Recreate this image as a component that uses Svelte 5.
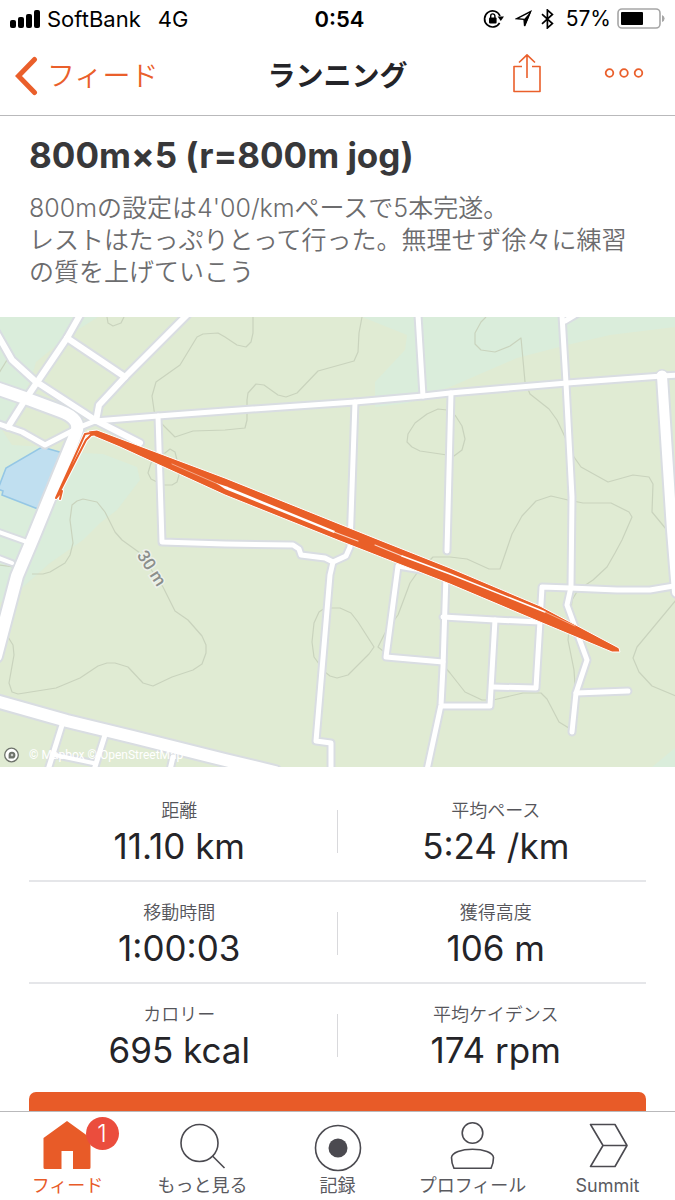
<script>
  const stats = [
    [{ label: '距離', value: '11.10 km' }, { label: '平均ペース', value: '5:24 /km' }],
    [{ label: '移動時間', value: '1:00:03' }, { label: '獲得高度', value: '106 m' }],
    [{ label: 'カロリー', value: '695 kcal' }, { label: '平均ケイデンス', value: '174 rpm' }]
  ];

  const tabs = [
    { id: 'feed', label: 'フィード', badge: 1 },
    { id: 'explore', label: 'もっと見る' },
    { id: 'record', label: '記録' },
    { id: 'profile', label: 'プロフィール' },
    { id: 'summit', label: 'Summit' }
  ];
  let active = $state('feed');

  // Streets: w is the width of the white surface
  const roads = [
    { w: 12, d: 'M-4 388L25 398L60 411Q82 419 76 433L33 538L17 576L-4 656' },
    { w: 12, d: 'M-4 701L67 721L133 737L225 760L275 772' },
    { w: 10, d: 'M662 376L672 530L677 592' },
    { w: 6, d: 'M-4 332L12 360L35 381L95 420L140 443' },
    { w: 6, d: 'M80 315L67 338L25 400L8 427' },
    { w: 6, d: 'M67 338L125 377' },
    { w: 6, d: 'M187 315L125 377L99 405L96 421' },
    { w: 5, d: 'M-4 423L22 432L45 445L80 427L95 421L158 416L225 411L355 402L423 396L450 393L567 383L662 376L680 375' },
    { w: 5, d: 'M158 416L162 542L225 544L293 545L299 549L301 555L325 558L333 562L346 556L350 547L355 402' },
    { w: 5, d: 'M333 562L330 575L316 741L331 743L331 770' },
    { w: 5, d: 'M418 315L423 396' },
    { w: 5, d: 'M451 393L447 551' },
    { w: 5, d: 'M446 575L443 667L441 705L427 770' },
    { w: 5, d: 'M562 315L566 383L572 497L571 587L567 605L587 660L576 693L572 732' },
    { w: 5, d: 'M565 321L580 312' },
    { w: 5, d: 'M493 687L536 688L542 587L570 588L617 590L650 590L680 585' },
    { w: 5, d: 'M443 617L495 620L540 622' },
    { w: 5, d: 'M495 620L490 706L442 706' },
    { w: 5, d: 'M576 693L628 691' },
    { w: 5, d: 'M422 570L398 566L386 657L443 662' },
    { w: 5, d: 'M62 725L48 770' },
    { w: 5, d: 'M105 735L94 770' },
    { w: 5, d: 'M173 757L170 770' },
    { w: 4, d: 'M55 755L93 763' },
    { w: 4, d: 'M-4 557L12 563' },
    { w: 4, d: 'M-4 531L27 542' }
  ];

  const contours = [
    'M107 317L108 323L113 326L121 323L124 317',
    'M253 317L253 333L251 342L246 347L237 345L225 337L218 333L203 334L197 337L180 365L156 382L152 396L155 417L163 425L175 437L193 431L225 430L245 428L247 420L247 400L248 393L256 384L264 385L278 395L286 397L297 393L318 371L354 361L358 352L359 333L362 317',
    'M160 454L151 463L148 473L151 479L163 485L172 485L177 482L179 475L175 463L177 460L175 452L170 449L165 453Z',
    'M32 574L43 574L50 572L65 563L70 555L73 543L70 520L72 505L77 501L83 499L97 502L105 512L115 532L122 540L140 553L163 587L175 611L188 620L202 636L206 645L206 653L202 664L193 670L172 677L153 686L143 683L128 667L115 663L107 663L98 666L80 678L56 688L18 694L12 692L9 683L14 655L13 645L8 637',
    'M447 410L438 409L427 414L415 423L408 434L407 442L412 447L420 451L454 456L462 450L465 439L462 426L455 415',
    'M486 317L481 322L475 333L475 344L481 350L495 352L510 346L521 338L523 360L525 382L530 394L549 409L557 420L565 437L574 457L581 467L608 482L633 475L649 477L653 484L652 512L666 529',
    'M443 665L450 673L465 692L482 700L493 700L523 693L541 693L547 699L559 722L572 730L577 715L574 670L568 640L572 600L578 590L593 580L607 567L615 553L622 540L632 517L629 512L611 503L583 503L568 500L551 496L536 501L522 516L512 534L500 569L489 569L467 559L450 557L433 557L417 573L410 583L398 615L385 633L378 647L383 651',
    'M325 608L340 608L351 613L358 622L374 647L369 654L348 675L337 678L330 676L325 672L314 657L312 642L314 623L319 612Z',
    'M676 600L637 647L633 658L639 672L652 686L676 696',
    'M7 360L-1 373',
    'M-1 565L14 567'
  ];
</script>

<div class="app">
  <div class="status">
    <div class="side">
      <svg class="signal" viewBox="0 0 31 18" aria-hidden="true">
        <rect x="0" y="10" width="6" height="8" rx="2" /><rect x="8" y="7" width="6" height="11" rx="2" />
        <rect x="16" y="4" width="6" height="14" rx="2" /><rect x="24" y="0" width="6" height="18" rx="2" />
      </svg>
      <span>SoftBank</span><span class="net">4G</span>
    </div>
    <b>0:54</b>
    <div class="side end">
      <svg width="22" height="20" viewBox="0 0 22 20" aria-hidden="true">
        <path d="M16.6 13.8A8 8 0 1 1 17 7" fill="none" stroke="#000" stroke-width="1.7" />
        <path d="M14.6 7.6H21L17.8 12z" />
        <rect x="6" y="8.5" width="7.6" height="6" rx="1" />
        <path d="M7.700 9V7a2.100 2.100 0 0 1 4.200 0v2" fill="none" stroke="#000" stroke-width="1.4" />
      </svg>
      <svg class="arrow" width="18" height="18" viewBox="0 0 18 18" aria-hidden="true">
        <path d="M1.8 8.600L15.600 1.600L9.600 16L9 9.300z" fill="none" stroke="#000" stroke-width="1.4" />
        <path d="M16.500.8L9 9.300L9.800 16.600z" />
      </svg>
      <svg class="bt" width="13" height="20" viewBox="0 0 13 20" aria-hidden="true">
        <path d="M1 5.200L11.400 14.600L6.400 19V1L11.400 5.400L1 14.800" fill="none" stroke="#000" stroke-width="1.7" />
      </svg>
      <span>57%</span>
      <svg class="battery" width="48" height="22" viewBox="0 0 48 22" aria-hidden="true">
        <rect x="1" y="1" width="42" height="19" rx="4" fill="none" stroke="#a6a6a6" stroke-width="1.6" />
        <rect x="4" y="4" width="22" height="13" rx="1" />
        <path d="M45 7q2.600 1 2.600 3.500T45 14z" fill="#a6a6a6" />
      </svg>
    </div>
  </div>

  <header>
    <button class="back">
      <svg width="24" height="40" viewBox="0 0 24 40" aria-hidden="true">
        <path d="M19.500 3.500L3.500 20L19.500 36.500" fill="none" stroke="currentColor" stroke-width="5" stroke-linecap="round" />
      </svg>
      <span>フィード</span>
    </button>
    <h1>ランニング</h1>
    <div class="actions">
      <button aria-label="共有">
        <svg width="28" height="40" viewBox="0 0 28 40" fill="none" stroke="currentColor" stroke-width="1.6" aria-hidden="true">
          <path d="M9 13.500H1V38.500H27V13.500H19M14 25V2M6 9.500L14 1.800L22 9.500" stroke-linejoin="round" />
        </svg>
      </button>
      <button aria-label="その他">
        <svg width="40" height="12" viewBox="0 0 40 12" fill="none" stroke="currentColor" stroke-width="1.8" aria-hidden="true">
          <circle cx="5.500" cy="6" r="3.800" /><circle cx="20" cy="6" r="3.800" /><circle cx="34.500" cy="6" r="3.800" />
        </svg>
      </button>
    </div>
  </header>

  <main>
    <section class="intro">
      <h2>800m×5 (r=800m jog)</h2>
      <p>800mの設定は4'00/kmペースで5本完遂。<br />レストはたっぷりとって行った。無理せず徐々に練習の質を上げていこう</p>
    </section>

    <svg class="map" viewBox="0 317 675 450" role="img" aria-label="ルート">
      <rect x="0" y="317" width="675" height="450" fill="#e0ebd3" />
      <g fill="#daeddb">
        <path d="M0 317H98L68 336L36 362L32 376L22 400L8 427L0 432Z" />
        <path d="M0 427L12 445L45 447L62 452L103 454L137 467L140 480L117 510L100 523L83 540L50 563L23 587L0 603Z" />
        <path d="M362 317L407 335L405 350L375 382V407L408 403L425 396L450 387L517 358L567 345L610 335L675 327V317Z" />
        <path d="M652 767L675 748V767Z" />
      </g>
      <path d="M42 447L63 453L38 509L2 495L3 491L-2 489L6 468Z" fill="#c0dff0" stroke="#95c7e5" stroke-width="1.600" />
      <g fill="none" stroke="#c9d3bd" stroke-width="1.200" stroke-linejoin="round">
        {#each contours as d}<path {d} />{/each}
      </g>
      <g fill="none" stroke="#d9dde2" stroke-linejoin="round" stroke-linecap="round">
        {#each roads as r}<path d={r.d} stroke-width={r.w + 4} />{/each}
      </g>
      <g fill="none" stroke="#fff" stroke-linejoin="round" stroke-linecap="round">
        <circle cx="662" cy="376" r="2" stroke-width="7" />
        {#each roads as r}<path d={r.d} stroke-width={r.w} />{/each}
      </g>

      <g fill="none" stroke-linejoin="round" stroke-linecap="round">
        <path d="M60 499L62 491L56 498L85 434L97 432M60 491L86 440L91 435L97 434" stroke="#fff" stroke-width="4" />
        <path d="M88 431L97 430L225 478L377 539L450 568L540 606L619 648L620 652L612 652L540 622L450 584L340 541L225 495L120 447L96 437Z" fill="#e95f28" stroke="#fff" stroke-width="1" />
        <path d="M60 499L62 491L56 498L85 434L97 432M60 491L86 440L91 435L97 434" stroke="#e95f28" stroke-width="2" />
        <path d="M172 464L218 484" stroke="#f5a888" stroke-width="1" />
        <path d="M216 483L226 486.300L335 531L334 533L225 489Z" fill="#fff" />
        <path d="M334 532L358 541M375 545L402 556" stroke="#fbd6c6" stroke-width="1.200" />
        <path d="M402 556L450 574L545 612" stroke="#fff" stroke-width="1.600" />
        <path d="M545 612L575 626" stroke="#f5a888" stroke-width="1" />
      </g>

      <text class="elev" transform="translate(152 568) rotate(57)" text-anchor="middle" dominant-baseline="central">30 m</text>
      <circle cx="11.500" cy="755" r="6.800" fill="#fff" stroke="#6d726b" stroke-width="1.300" />
      <path d="M8.600 758.500V755a3.400 3.400 0 1 1 3.400 3.500z" fill="#6d726b" />
      <path d="M12 753.300l.5 1.200 1.200.5-1.200.5-.5 1.200-.5-1.200-1.200-.5 1.200-.5z" fill="#fff" />
      <text class="credit" x="29" y="759">© Mapbox © OpenStreetMap</text>
    </svg>

    <dl class="stats">
      {#each stats as row}
        <div class="row">
          {#each row as s}
            <div class="cell"><dt>{s.label}</dt><dd>{s.value}</dd></div>
          {/each}
        </div>
      {/each}
    </dl>
    <button class="cta" aria-label="詳細を見る"></button>
  </main>

  <nav>
    {#each tabs as t}
      <button class:active={active === t.id} onclick={() => (active = t.id)}>
        <span class="icon">
          <svg width="52" height="50" viewBox="0 0 52 50" fill="none" stroke="#4b4a50" stroke-width="1.600" stroke-linejoin="round" aria-hidden="true">
            {#if t.id === 'feed'}
              <path d="M25 1L48.500 18V47.500q0 1.500-1.500 1.500H31V31H19.500V49H3q-1.500 0-1.500-1.500V18Z" fill="#e85b28" stroke="none" />
            {:else if t.id === 'explore'}
              <circle cx="22.500" cy="23" r="18.500" /><path d="M35.500 36L47.500 48" />
            {:else if t.id === 'record'}
              <circle cx="26" cy="28" r="22.500" /><circle cx="26" cy="28" r="9.500" fill="#4b4a50" stroke="none" />
            {:else if t.id === 'profile'}
              <circle cx="25.500" cy="13" r="10.300" />
              <path d="M7 48.300C5 44.500 4.500 42 4.500 37.500C5 32.500 14.500 29.300 25.500 29.300S46 32.500 46.500 37.500C46.500 42 46 44.500 44 48.300Z" />
            {:else}
              <path d="M8.500 4.500H33L45 25.500L33 46.500H8.500L21 25.500ZM21 25.500H45" />
            {/if}
          </svg>
          {#if t.badge}<span class="badge">{t.badge}</span>{/if}
        </span>
        <span>{t.label}</span>
      </button>
    {/each}
  </nav>
</div>

<style>
  :global(body) { margin: 0; background: #fff; }
  .app {
    display: flex;
    flex-direction: column;
    height: 100vh;
    overflow: hidden;
    font-family: Inter, 'Noto Sans CJK JP', sans-serif;
    color: #242428;
  }
  button { border: 0; padding: 0; background: none; font: inherit; color: inherit; cursor: pointer; }
  svg { display: block; flex: none; }

  .status {
    display: grid;
    grid-template-columns: 1fr auto 1fr;
    align-items: center;
    height: 38px;
    padding: 0 10px;
    font-size: 22px;
    line-height: 38px;
    color: #000;
  }
  .status b { margin-left: 4px; font-weight: 600; }
  .side { display: flex; align-items: center; }
  .end { justify-content: flex-end; font-size: 21px; }
  .signal { width: 31px; height: 18px; margin-right: 6px; }
  .net { margin-left: 17px; }
  .arrow { margin-left: 10px; }
  .bt { margin: 0 12px 0 8px; }
  .battery { margin-left: 6px; }

  header {
    display: grid;
    grid-template-columns: 1fr auto 1fr;
    align-items: center;
    height: 75px;
    padding: 0 31px 2px 15px;
    border-bottom: 1px solid #b9b9bb;
  }
  .back, .actions { color: #ea5f2b; }
  .back { display: flex; align-items: center; gap: 8px; font-size: 28px; font-weight: 350; line-height: 40px; }
  h1 { margin: 0 0 0 16px; font-size: 28px; line-height: 40px; font-weight: 700; }
  .actions { display: flex; justify-content: flex-end; align-items: center; gap: 63px; padding-bottom: 5px; }

  main { flex: 1; min-height: 0; overflow: hidden; }
  .intro { padding: 18px 29px 29px; }
  h2 { margin: 0 0 16px; font-size: 35px; line-height: 42px; font-weight: 700; color: #38383a; }
  p { margin: 0; font-size: 25px; line-height: 32px; font-weight: 350; color: #6c6c6e; }
  .map { width: 100%; height: auto; }
  .elev { font: 500 17px Roboto, sans-serif; fill: #8b8f8c; stroke: #edf1ea; stroke-width: 3px; paint-order: stroke; }
  .credit { font: 12px Roboto, sans-serif; fill: #fff; }

  .stats { margin: 13px 29px 6px; }
  .row {
    display: grid;
    grid-template-columns: 1fr 1fr;
    column-gap: 16px;
    height: 102px;
    box-sizing: border-box;
    border-bottom: 2px solid #e5e6e9;
  }
  .row:last-child { border-bottom-color: transparent; }
  .cell { position: relative; padding-top: 18px; text-align: center; }
  .cell + .cell::before { content: ''; position: absolute; left: -9px; top: 30px; width: 1px; height: 43px; background: #d9d9dc; }
  dt { font-size: 18px; line-height: 26px; font-weight: 350; color: #55555a; }
  dd { margin: 0; font-size: 35px; line-height: 44px; }
  .cta { display: block; width: calc(100% - 58px); height: 84px; margin: 0 29px; border-radius: 7px; background: #e85b28; }

  nav { display: grid; grid-template-columns: repeat(5, 1fr); height: 88px; border-top: 1px solid #b9b9bb; background: #fff; }
  nav button { display: flex; flex-direction: column; align-items: center; padding-top: 8px; font-size: 18px; line-height: 32px; color: #5a5a5f; }
  nav svg { overflow: visible; }
  nav .active { color: #e85b28; }
  .icon { position: relative; display: block; }
  .badge {
    position: absolute;
    left: 44px;
    top: -3px;
    width: 33px;
    height: 33px;
    border-radius: 50%;
    background: #eb4d3d;
    color: #fff;
    font-size: 24px;
    font-weight: 300;
    line-height: 33px;
    text-align: center;
  }
</style>
